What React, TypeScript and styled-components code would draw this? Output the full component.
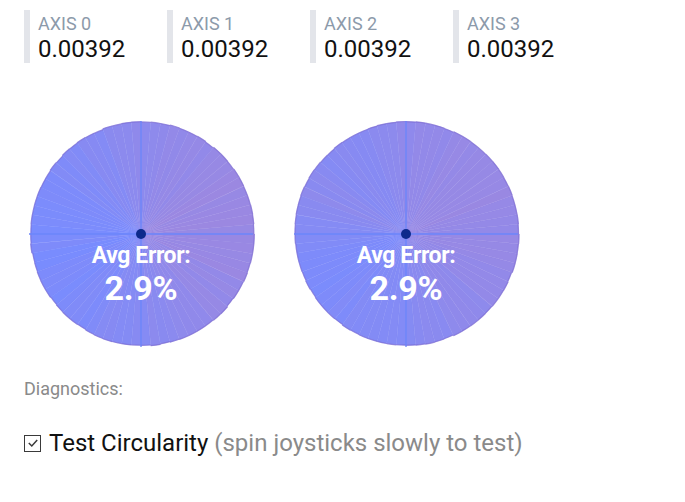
import React from 'react';
import styled, { createGlobalStyle } from 'styled-components';

const GlobalStyle = createGlobalStyle`
  body {
    margin: 0;
    background: #ffffff;
    font-family: Roboto, 'Liberation Sans', sans-serif;
  }
`;

const Page = styled.div`
  padding: 10px 24px 0;
`;

const AxisRow = styled.div`
  display: flex;
`;

const AxisItem = styled.div`
  width: 143px;
  box-sizing: border-box;
`;

const AxisBody = styled.div`
  border-left: 6px solid #e3e5ea;
  padding: 3px 0 0 8px;
  height: 50px;
`;

const AxisLabel = styled.div`
  font-size: 18px;
  line-height: 22px;
  color: #8c9aaa;
`;

const AxisValue = styled.div`
  font-size: 24px;
  line-height: 28px;
  color: #111111;
`;

const ChartRow = styled.div`
  display: flex;
  gap: 31px;
  margin-top: 54px;
`;

const ChartSvg = styled.svg`
  display: block;
  width: 234px;
  height: 234px;
  overflow: visible;
`;

const SectionLabel = styled.div`
  margin-top: 28px;
  font-size: 18px;
  line-height: 20px;
  color: #8a8a8a;
`;

const CheckRow = styled.label`
  display: flex;
  align-items: center;
  gap: 8px;
  margin-top: 30px;
  font-size: 24px;
  line-height: 28px;
  color: #111111;
`;

const Box = styled.span`
  width: 15px;
  height: 15px;
  border: 1.5px solid #3a3a3a;
  display: inline-flex;
  align-items: center;
  justify-content: center;
`;

const Hint = styled.span`
  color: #8a8a8a;
`;

const N = 72;
const BLUE = [120, 140, 255];
const PURPLE = [156, 136, 224];

const rand = (i: number, seed: number) => {
  const v = Math.sin(i * 12.9898 + seed * 78.233) * 43758.5453;
  return v - Math.floor(v);
};

type Shape = (deg: number) => number;

const shapes: Shape[] = [
  (d) => 0.5 + 0.42 * Math.cos(((d - 10) * Math.PI) / 180),
  (d) =>
    0.5 +
    0.35 * Math.cos(((d - 20) * Math.PI) / 180) +
    0.35 * Math.exp(-Math.pow((d - 160) / 18, 2)),
];

const mix = (f: number) => {
  const t = Math.max(0, Math.min(1, f));
  const c = BLUE.map((b, k) => Math.round(b + (PURPLE[k] - b) * t));
  return `rgb(${c[0]},${c[1]},${c[2]})`;
};

const Circularity: React.FC<{ seed: number }> = ({ seed }) => {
  const shape = shapes[seed];
  const step = 360 / N;
  const wedges = Array.from({ length: N }, (_, i) => {
    const a0 = i * step;
    const a1 = a0 + step;
    const f = shape(a0 + step / 2) + (rand(i, seed + 1) - 0.5) * 0.18;
    const r = 110 + 3.5 * Math.max(0, Math.min(1, f)) + (rand(i, seed + 7) - 0.5) * 0.4;
    // math angle, y up
    const p0 = [r * Math.cos((a0 * Math.PI) / 180), -r * Math.sin((a0 * Math.PI) / 180)];
    const p1 = [r * Math.cos((a1 * Math.PI) / 180), -r * Math.sin((a1 * Math.PI) / 180)];
    return { d: `M0 0 L${p0[0]} ${p0[1]} A${r} ${r} 0 0 0 ${p1[0]} ${p1[1]} Z`, fill: mix(f), p0, p1, r };
  });

  return (
    <ChartSvg viewBox="-117 -117 234 234">
      {wedges.map((w, i) => (
        <path key={i} d={w.d} fill={w.fill} stroke={w.fill} strokeWidth={0.4} />
      ))}
      {wedges.map((w, i) => (
        <path
          key={`e${i}`}
          d={`M${w.p0[0]} ${w.p0[1]} A${w.r} ${w.r} 0 0 0 ${w.p1[0]} ${w.p1[1]}`}
          fill="none"
          stroke="rgba(118,100,205,0.6)"
          strokeWidth={1.2}
        />
      ))}
      <line x1={-112} y1={0} x2={112} y2={0} stroke="#6b86fb" strokeWidth={1.3} />
      <line x1={0} y1={-113} x2={0} y2={113} stroke="#6b86fb" strokeWidth={1.3} />
      <circle cx={0} cy={0} r={5} fill="#0d2a8c" />
      <text
        x={0}
        y={29}
        textAnchor="middle"
        fill="#ffffff"
        fontFamily="Roboto, 'Liberation Sans', sans-serif"
        fontWeight={700}
        fontSize={23}
        letterSpacing={-0.4}
      >
        Avg Error:
      </text>
      <text
        x={0}
        y={66}
        textAnchor="middle"
        fill="#ffffff"
        fontFamily="Roboto, 'Liberation Sans', sans-serif"
        fontWeight={700}
        fontSize={34}
        letterSpacing={-0.3}
      >
        2.9%
      </text>
    </ChartSvg>
  );
};

const axes = ['AXIS 0', 'AXIS 1', 'AXIS 2', 'AXIS 3'];

const App: React.FC = () => (
  <Page>
    <GlobalStyle />
    <AxisRow>
      {axes.map((name) => (
        <AxisItem key={name}>
          <AxisBody>
            <AxisLabel>{name}</AxisLabel>
            <AxisValue>0.00392</AxisValue>
          </AxisBody>
        </AxisItem>
      ))}
    </AxisRow>
    <ChartRow>
      <Circularity seed={0} />
      <Circularity seed={1} />
    </ChartRow>
    <SectionLabel>Diagnostics:</SectionLabel>
    <CheckRow>
      <Box>
        <svg width="12" height="12" viewBox="0 0 12 12">
          <path d="M1.8 6 L4.8 9 L10.2 3" fill="none" stroke="#3a3a3a" strokeWidth="1.5" />
        </svg>
      </Box>
      <span>
        Test Circularity <Hint>(spin joysticks slowly to test)</Hint>
      </span>
    </CheckRow>
  </Page>
);

export default App;
